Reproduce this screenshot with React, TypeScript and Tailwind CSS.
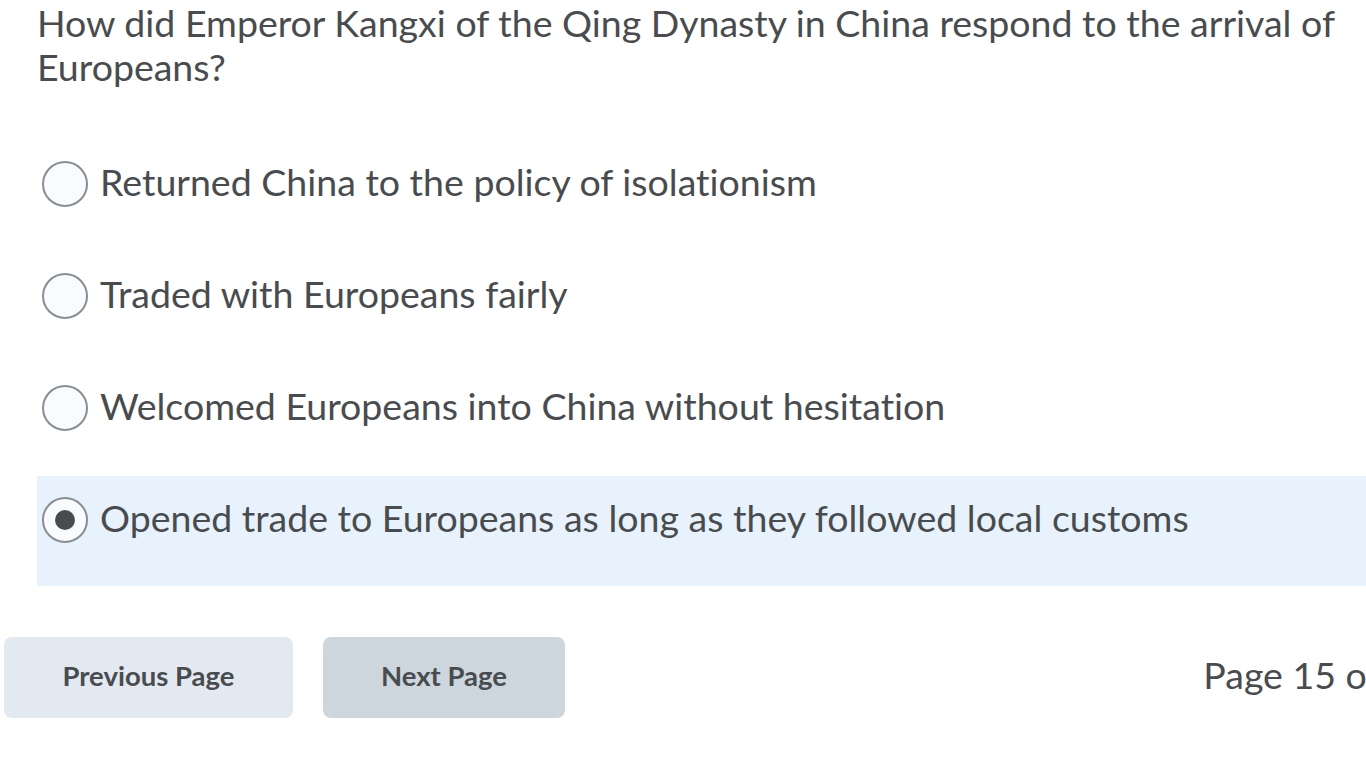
import React from "react";

const options = [
  "Returned China to the policy of isolationism",
  "Traded with Europeans fairly",
  "Welcomed Europeans into China without hesitation",
  "Opened trade to Europeans as long as they followed local customs",
];

export default function App() {
  return (
    <div
      className="w-[1366px] h-[768px] overflow-hidden bg-white text-[#494c4e] [font-variant-ligatures:none]"
      style={{ fontFamily: "Lato, 'Noto Sans', sans-serif" }}
    >
      <div className="pl-[37px] pt-[1px] pr-[20px] text-[37.5px] leading-[44px]">
        How did Emperor Kangxi of the Qing Dynasty in China respond to the arrival of Europeans?
      </div>
      <div className="mt-[51px] ml-[37px] flex flex-col gap-[2px]">
        {options.map((o, i) => {
          const checked = i === 3;
          return (
            <div
              key={i}
              className={`h-[110px] flex items-start pt-[21px] ${checked ? "bg-[#e8f2fc]" : ""}`}
            >
              <div className="ml-[5px] w-[46px] h-[46px] rounded-full border-2 border-[#898e93] bg-[#f9fbff] flex items-center justify-center shrink-0">
                {checked && <div className="w-[20px] h-[20px] rounded-full bg-[#494c4e]" />}
              </div>
              <div className="ml-[12px] -mt-[2px] text-[37.5px] leading-[46px] whitespace-nowrap">{o}</div>
            </div>
          );
        })}
      </div>
      <div className="mt-[51px] flex items-center">
        <button className="ml-[4px] w-[289px] h-[81px] pb-[4px] rounded-[8px] bg-[#e3e9f1] text-[27.5px] font-bold text-[#494c4e]">
          Previous Page
        </button>
        <button className="ml-[30px] w-[242px] h-[81px] pb-[4px] rounded-[8px] bg-[#cdd5dd] text-[27.5px] font-bold text-[#494c4e]">
          Next Page
        </button>
        <div className="ml-auto mb-[5px] text-[37.5px] leading-[44px] whitespace-nowrap" style={{ marginRight: -66 }}>
          Page 15 of 20
        </div>
      </div>
    </div>
  );
}
